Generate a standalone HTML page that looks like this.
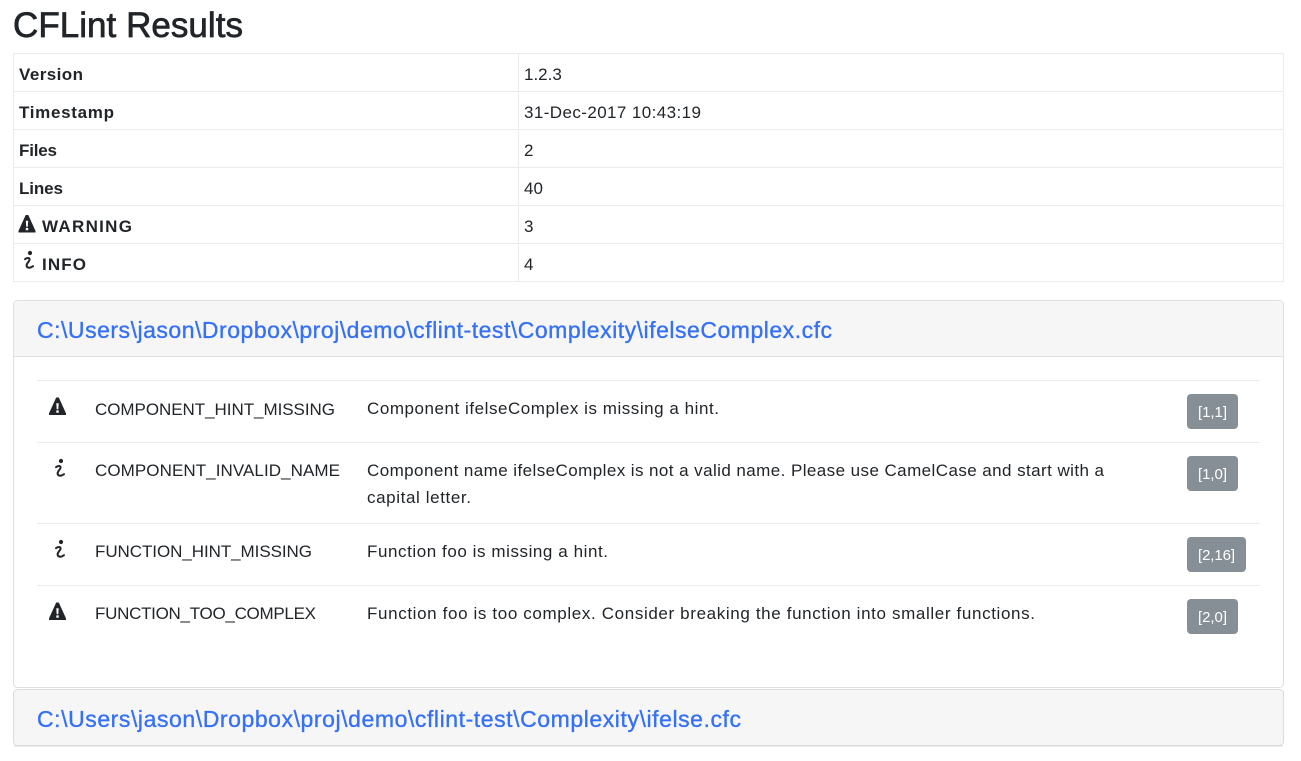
<!DOCTYPE html>
<html lang="en">
<head>
<meta charset="utf-8">
<title>CFLint Results</title>
<style>
html,body{margin:0;padding:0;background:#fff;width:1301px;height:761px;overflow:hidden}
svg{display:block}
text{font-family:"Liberation Sans",Arial,sans-serif;font-size:17px;fill:#212529}
.b{font-weight:bold;font-size:17px}
.t{font-size:35px;stroke:#212529;stroke-width:.7px}
.l{font-size:23px;fill:#3570f5;stroke:#3570f5;stroke-width:.35px}
.w{font-size:15px;fill:#fff}
</style>
</head>
<body>
<svg width="1301" height="761" viewBox="0 0 1301 761" xmlns="http://www.w3.org/2000/svg">
<defs>
<symbol id="warn" viewBox="0 0 17 18" overflow="visible">
<path fill="#212529" fill-rule="evenodd" d="M7.2 0.5H9.8L17 16.4V18H0V16.4ZM7.3 6.2L7.7 12.2H9.3L9.7 6.2ZM7.3 13.4V15.8H9.7V13.4Z"/>
</symbol>
<symbol id="info" viewBox="-8 -3 16 24" overflow="visible">
<circle cx="0" cy="0" r="2.1" fill="#212529"/>
<path fill="none" stroke="#212529" stroke-width="2" stroke-linecap="round" d="M-5 6.2C-3.5 4.8 -0.2 4.4 -0.4 6.6C-0.6 8.4 -3.4 10 -3.4 12.4C-3.4 15.2 0 15.4 3 13.2"/>
</symbol>
</defs>

<text class="t" x="13" y="37" textLength="230">CFLint Results</text>

<!-- table -->
<g fill="none" stroke="#e9ecef" stroke-width="1">
<rect x="13.5" y="53.5" width="1270" height="228"/>
<path d="M13 91.5H1284M13 129.5H1284M13 167.5H1284M13 205.5H1284M13 243.5H1284M518.5 53V282"/>
</g>
<text class="b" x="19" y="80" textLength="64">Version</text>
<text class="b" x="19" y="118" textLength="95">Timestamp</text>
<text class="b" x="19" y="156" textLength="38">Files</text>
<text class="b" x="19" y="194" textLength="44">Lines</text>
<use href="#warn" x="18.5" y="214.5" width="17" height="18"/>
<text class="b" x="42" y="232" textLength="90">WARNING</text>
<use href="#info" x="22" y="250" width="16" height="24"/>
<text class="b" x="42" y="270" textLength="44">INFO</text>
<text x="524" y="80">1.2.3</text>
<text x="524" y="118" textLength="177">31-Dec-2017 10:43:19</text>
<text x="524" y="156">2</text>
<text x="524" y="194">40</text>
<text x="524" y="232">3</text>
<text x="524" y="270">4</text>

<!-- card 1 -->
<rect x="13.5" y="300.5" width="1270" height="387" rx="4" fill="#fff" stroke="#dfdfdf"/>
<path d="M14 356V305C14 302.8 15.8 301 18 301H1279C1281.2 301 1283 302.8 1283 305V356Z" fill="#f6f6f6"/>
<path d="M13 356.5H1284" stroke="#dfdfdf"/>
<text class="l" x="37" y="338" textLength="795">C:\Users\jason\Dropbox\proj\demo\cflint-test\Complexity\ifelseComplex.cfc</text>

<path d="M37 380.5H1260M37 442.5H1260M37 523.5H1260M37 585.5H1260" stroke="#e9ecef"/>

<use href="#warn" x="49" y="397" width="17" height="18"/>
<text x="95" y="415" textLength="240">COMPONENT_HINT_MISSING</text>
<text x="367" y="414" textLength="352">Component ifelseComplex is missing a hint.</text>
<rect x="1187" y="394" width="51" height="35" rx="4" fill="#868e96"/>
<text class="w" x="1198" y="417" textLength="29">[1,1]</text>

<use href="#info" x="53" y="458" width="16" height="24"/>
<text x="95" y="476" textLength="245">COMPONENT_INVALID_NAME</text>
<text x="367" y="476" textLength="737">Component name ifelseComplex is not a valid name. Please use CamelCase and start with a</text>
<text x="367" y="503" textLength="104">capital letter.</text>
<rect x="1187" y="456" width="51" height="35" rx="4" fill="#868e96"/>
<text class="w" x="1198" y="479" textLength="29">[1,0]</text>

<use href="#info" x="53" y="539" width="16" height="24"/>
<text x="95" y="557" textLength="217">FUNCTION_HINT_MISSING</text>
<text x="367" y="557" textLength="241">Function foo is missing a hint.</text>
<rect x="1187" y="537" width="59" height="35" rx="4" fill="#868e96"/>
<text class="w" x="1198" y="560" textLength="37">[2,16]</text>

<use href="#warn" x="49" y="602" width="17" height="18"/>
<text x="95" y="619" textLength="221">FUNCTION_TOO_COMPLEX</text>
<text x="367" y="619" textLength="668">Function foo is too complex. Consider breaking the function into smaller functions.</text>
<rect x="1187" y="599" width="51" height="35" rx="4" fill="#868e96"/>
<text class="w" x="1198" y="622" textLength="29">[2,0]</text>

<!-- card 2 -->
<rect x="13.5" y="689.5" width="1270" height="56" rx="4" fill="#f6f6f6" stroke="#dcdcdc"/>
<path d="M14 746H1283" stroke="#d8d8d8"/>
<text class="l" x="37" y="727" textLength="704">C:\Users\jason\Dropbox\proj\demo\cflint-test\Complexity\ifelse.cfc</text>
</svg>
</body>
</html>
